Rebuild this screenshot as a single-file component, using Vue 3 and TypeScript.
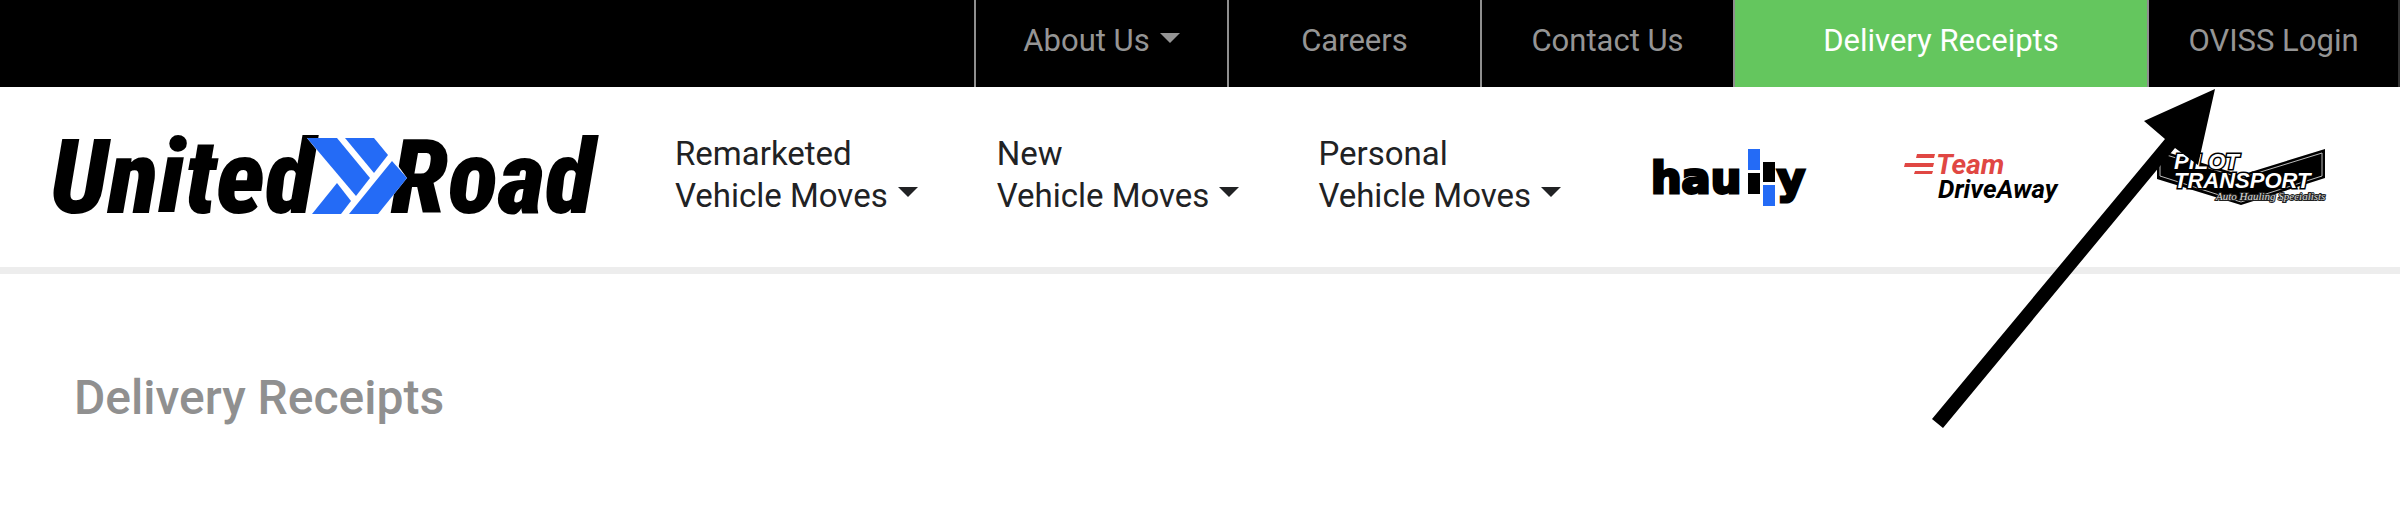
<script setup lang="ts">
interface TopLink {
  label: string
  kind?: 'menu' | 'active'
}

const topLinks: TopLink[] = [
  { label: 'About Us', kind: 'menu' },
  { label: 'Careers' },
  { label: 'Contact Us' },
  { label: 'Delivery Receipts', kind: 'active' },
  { label: 'OVISS Login' },
]

const menus: string[] = ['Remarketed', 'New', 'Personal']
</script>

<template>
  <div class="page">
    <nav class="topbar" aria-label="Utility">
      <template v-for="link in topLinks" :key="link.label">
        <button v-if="link.kind === 'menu'" class="toplink" type="button">
          {{ link.label }}<span class="caret"></span>
        </button>
        <a v-else class="toplink" :class="{ active: link.kind === 'active' }" href="#">{{ link.label }}</a>
      </template>
    </nav>

    <header class="header">
      <a class="logo" href="#" aria-label="United Road">
        <svg width="550" height="90" viewBox="50 130 550 90">
          <text class="wordmark" x="50" y="213">United</text>
          <text class="wordmark" x="391" y="213">Road</text>
          <path fill="#fff" d="M307 138 L378 138 L407 178 L378 214 L312 214 L320 154 Z" />
          <g fill="#246bf6">
            <path d="M307 138 H337 L370 178 L356 196 Z" />
            <path d="M345 138 H374 L388 155 L374 173 Z" />
            <path d="M392 161 L407 178 L378 214 H349 Z" />
            <path d="M337 183 L351 201 L341 214 H312 Z" />
          </g>
        </svg>
      </a>

      <nav class="menus" aria-label="Main">
        <button v-for="name in menus" :key="name" class="menu" type="button">
          {{ name }}<br />Vehicle Moves<span class="caret"></span>
        </button>
      </nav>

      <div class="brands">
        <a href="#" aria-label="Haully">
          <svg width="156" height="60" viewBox="1653 148 156 60">
            <text class="haully" x="1652" y="193">hau</text>
            <text class="haully" x="1778" y="193">y</text>
            <rect x="1749" y="173" width="12" height="21" />
            <rect x="1764" y="162" width="12" height="20" />
            <rect x="1749" y="149" width="12" height="21" fill="#246bf6" />
            <rect x="1764" y="185" width="12" height="21" fill="#246bf6" />
          </svg>
        </a>
        <a href="#" aria-label="Team DriveAway">
          <svg width="156" height="60" viewBox="1906 148 156 60">
            <g fill="#e04743">
              <path d="M1919 154 H1937 L1936 158 H1918 Z" />
              <path d="M1907 163 H1936 L1935 167 H1906 Z" />
              <path d="M1917 171 H1935 L1934 174 H1916 Z" />
              <text class="team" x="1938" y="174">Team</text>
            </g>
            <text class="drive" x="1940" y="198">DriveAway</text>
          </svg>
        </a>
        <a href="#" aria-label="Pilot Transport">
          <svg width="170" height="60" viewBox="2156 148 170 60">
            <path d="M2157 149 L2241 175 L2325 149 V178 L2241 205 L2157 179 Z" />
            <path
              d="M2160 153 L2241 178 L2322 153 V176 L2241 202 L2160 176 Z"
              fill="none"
              stroke="#bbb"
            />
            <text class="pilot" x="2174" y="169">PILOT</text>
            <text class="pilot" x="2174" y="188">TRANSPORT</text>
            <text class="tagline" x="2216" y="200">Auto Hauling Specialists</text>
          </svg>
        </a>
      </div>
    </header>

    <main class="content">
      <h1>Delivery Receipts</h1>
    </main>

    <svg class="arrow" width="284" height="341" viewBox="1932 88 284 341" aria-hidden="true">
      <path d="M2215 89 L2144 121 L2165 139 L1932 419 L1943 428 L2175 148 L2198 165 Z" />
    </svg>
  </div>
</template>

<style>
body {
  margin: 0;
  background: #fff;
}
</style>

<style scoped>
.page {
  position: relative;
  font-family: Roboto, "Liberation Sans", sans-serif;
  color: #212224;
}

a {
  color: inherit;
  text-decoration: none;
}

button {
  margin: 0;
  border: 0;
  background: none;
  color: inherit;
  font-family: inherit;
  cursor: pointer;
}

.topbar {
  display: flex;
  justify-content: flex-end;
  background: #000;
}

.toplink {
  box-sizing: border-box;
  flex: 0 0 253px;
  padding: 22px 0 28px;
  border-left: 2px solid #8f8f8f;
  color: #959595;
  font-size: 31px;
  line-height: 37px;
  text-align: center;
  white-space: nowrap;
}

.toplink.active {
  flex-basis: 414px;
  background: #64c65e;
  color: #fff;
}

.toplink:last-child {
  border-right: 2px solid #333;
}

.caret {
  display: inline-block;
  margin-left: 10px;
  border: 10px solid transparent;
  border-top-color: currentColor;
  border-bottom: 0;
  vertical-align: 8px;
}

.menu .caret {
  vertical-align: 10px;
}

.header {
  display: flex;
  align-items: center;
  padding: 43px 74px 47px 50px;
  border-bottom: 7px solid #ededed;
}

svg {
  display: block;
  overflow: visible;
}

.menus {
  display: flex;
  gap: 79px;
  margin-left: 75px;
}

.menu {
  padding: 0;
  font-size: 33px;
  line-height: 42px;
  text-align: left;
  white-space: nowrap;
}

.brands {
  display: flex;
  gap: 96px;
  margin-top: 6px;
  margin-left: auto;
}

.wordmark {
  font: italic 900 104px "Roboto Condensed", Roboto, sans-serif;
}

.haully {
  stroke: #000;
  stroke-width: 3px;
  font: 700 43px "DejaVu Sans", sans-serif;
}

.team {
  font: italic 700 28px Roboto, sans-serif;
}

.drive {
  font: italic 700 26px Roboto, sans-serif;
}

.pilot {
  fill: #fff;
  stroke: #000;
  stroke-width: 3px;
  paint-order: stroke;
  font: italic 700 22px "Liberation Sans", sans-serif;
}

.tagline {
  fill: #ddd;
  stroke: #222;
  stroke-width: 2px;
  paint-order: stroke;
  font: italic 11px "Liberation Serif", serif;
}

.content {
  padding: 94px 74px;
}

h1 {
  margin: 0;
  color: #909090;
  font-size: 48px;
  font-weight: 500;
  line-height: 60px;
}

.arrow {
  position: absolute;
  top: 88px;
  right: 184px;
  pointer-events: none;
}
</style>
